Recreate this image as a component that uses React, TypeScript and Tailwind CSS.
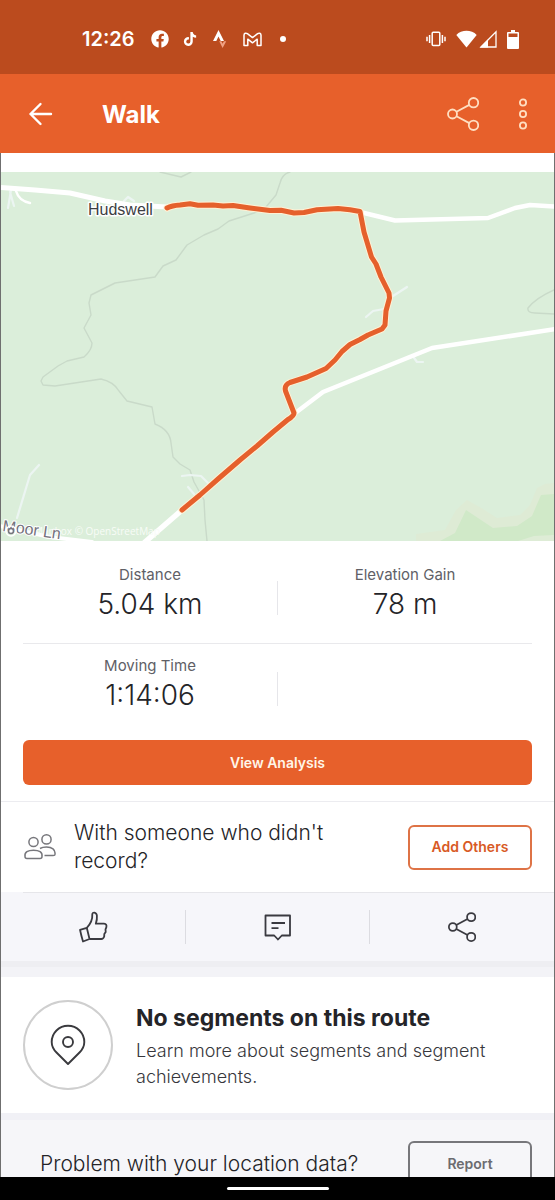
import type { ReactNode } from "react";
import { FaFacebook, FaTiktok } from "react-icons/fa";

function ShareIcon({ className }: { className?: string }) {
  return (
    <svg viewBox="0 0 32 34" fill="none" stroke="currentColor" className={className} aria-hidden="true">
      <circle cx="5.5" cy="17" r="4.5" />
      <circle cx="26.5" cy="5.7" r="4.7" />
      <circle cx="26.5" cy="28.3" r="4.7" />
      <path d="M9.5 14.8 22.3 7.9M9.5 19.2l12.8 6.9" />
    </svg>
  );
}

function StatusBar() {
  return (
    <div className="flex h-[74px] shrink-0 items-center justify-between bg-[#bb4b1e] pt-1 pr-9 pl-[82px] text-white">
      <div className="flex items-center">
        <span className="text-xl leading-6 font-semibold">12:26</span>
        <FaFacebook className="ml-4 size-[18px]" />
        <FaTiktok className="ml-3.5 size-3.5" />
        <svg viewBox="0 0 14 20" className="ml-4 h-5 w-3.5" aria-hidden="true">
          <path d="M5.5 1 0 12h3.300l2.200-4.400L7.700 12H11z" fill="#fff" />
          <path d="M6.200 12.200h2.200l1.200 2.500 1.300-2.500h2.300L9.600 19z" fill="#f0a183" />
        </svg>
        <svg viewBox="0 0 19 15" className="ml-4 h-[15px] w-[19px]" fill="none" stroke="#fff" strokeWidth="1.500" strokeLinejoin="round" aria-hidden="true">
          <path d="M1 3.200C1 1.200 3 .6 4.400 1.700l5.100 3.900 5.100-3.900C16 .6 18 1.200 18 3.200V13.400h-3.800V7.200L9.500 10.800 4.800 7.200v6.200H1z" />
        </svg>
        <span className="ml-[18px] size-1.5 rounded-full bg-white" />
      </div>
      <div className="flex items-center">
        <svg viewBox="0 0 20 16" className="h-4 w-5" fill="none" stroke="#fff" strokeWidth="1.500" aria-hidden="true">
          <rect x="6.200" y="1.300" width="7.600" height="13.200" rx="1" />
          <path d="M3.600 4v8M16.400 4v8M1 5.800v4.400M19 5.800v4.400" />
        </svg>
        <svg viewBox="0 0 21 18" className="ml-2.5 h-[18px] w-[21px]" fill="#fff" aria-hidden="true">
          <path d="M.3 5C5.500-.6 15.500-.6 20.700 5L10.500 17.600z" />
        </svg>
        <svg viewBox="0 0 18 18" className="ml-0.5 h-[18px] w-[18px]" aria-hidden="true">
          <path d="M2 17 17 1.800V17z" fill="none" stroke="#fff" strokeWidth="1.300" />
          <path d="M1 17.500 9 9.500v8z" fill="#fff" />
        </svg>
        <svg viewBox="0 0 12 19" className="ml-2.5 h-[19px] w-3" fill="#fff" aria-hidden="true">
          <path fillRule="evenodd" d="M4 0h4v2h3q1 0 1 1v15q0 1-1 1H1q-1 0-1-1V3q0-1 1-1h3zM1.500 3.500V7h9V3.500z" />
        </svg>
      </div>
    </div>
  );
}

function Header() {
  return (
    <header className="flex h-[79px] shrink-0 items-center bg-[#e7602b] pr-6 pl-7 text-white">
      <button type="button" aria-label="Back">
        <svg viewBox="0 0 26 24" className="h-6 w-[26px]" fill="none" stroke="currentColor" strokeWidth="2.400" strokeLinecap="round" strokeLinejoin="round" aria-hidden="true">
          <path d="M12.500 2 2.500 12l10 10M2.500 12H23" />
        </svg>
      </button>
      <h1 className="ml-12 flex-1 pt-0.5 text-2xl font-bold">Walk</h1>
      <button type="button" aria-label="Share" className="text-[#ffdfc2]">
        <ShareIcon className="h-[34px] w-8 stroke-[1.8]" />
      </button>
      <button type="button" aria-label="More options" className="ml-9 text-[#ffdfc2]">
        <svg viewBox="0 0 16 32" className="h-8 w-4" fill="none" stroke="currentColor" strokeWidth="1.800" aria-hidden="true">
          <circle cx="8" cy="4.500" r="3.100" />
          <circle cx="8" cy="16" r="3.100" />
          <circle cx="8" cy="27.500" r="3.100" />
        </svg>
      </button>
    </header>
  );
}

const ROUTE =
  "M167 208 Q172 205.500 180 205 L190 203.800 198 205.300 213 205 223 206 233 205.500 250 208 270 210.500 281 210.300 294 213 304 212.500 317 209.800 338 208.500 350 209.800 360 211.500 364 232 371.500 257 376 264 381 277 389 293 389.500 298 386 311 385 325 382 329 368 335 360 339.500 350 344.500 342 351.500 335 360 326 368.500 307 377 290 382.500 Q284 385 285.500 391 L294 413 Q294 416 288 419.500 L273 432 257 446 240 460 218 479 200 495 182 510";

function RouteMap() {
  return (
    <svg viewBox="1 172 553 369" className="block w-full bg-[#dbeeda]" fill="none" strokeLinejoin="round" strokeLinecap="round" role="img" aria-label="Route map">
      {/* woodland */}
      <path d="M416 541V534L445 530 456 510 467 500 483 509 497 518 520 515 530 505 537 488 545 484 554 483V541z" fill="#deebd5" />
      <path d="M440 541 455 533 466 510 493 528 517 526 532 516 541 495 554 494V541z" fill="#d0e9c8" />
      <path d="M518 541 534 536 554 535V541z" fill="#deecd6" />
      {/* footpaths */}
      <g stroke="#c9dac9" strokeWidth="1.400">
        <path d="M160 172 181 177 191 172" />
        <path d="M290 172Q282 174 280 183L276 195 266 207 254 213 229 221 218 229 204 235 187 245 176 260 163 266 155 277 115 283 91 295 89 303 91 315 84 328 92 343Q92 350 84 357L67 361 58 366 43 377 41 381 43 385 55 386 101 379Q114 382 119 391L127 401 152 407 155 424Q170 430 171 443L173 457 180 464 190 470 194 482 204 500 205 520 207 541" />
        <path d="M554 290Q536 298 528 308 527 313 535 313L554 314" />
      </g>
      {/* lanes and roads */}
      <g stroke="#ecf5f2" strokeWidth="2.200">
        <path d="M11 190 8 208M10 192 14 206M124 201 128 197 134 201M182 476 190 475 201 476 209 484M188 487 194 494M17 518 30 475 39 465M366 317 373 311 384 309M393 296 407 287M412 355 417 362 423 362" />
      </g>
      <g stroke="#fff">
        <path d="M16 191Q19 201 30 203" strokeWidth="2.500" />
        <path d="M1 187.500 35 190 70 193 105 201 130 205 167 207" strokeWidth="5" strokeLinecap="butt" />
        <path d="M360 212 395 220.500 488 218 515 208 530 205 556 206.500" strokeWidth="4.500" />
        <path d="M556 329 432 348 323 392 294 414" strokeWidth="4.500" />
        <path d="M182 510 145 542" strokeWidth="5.500" />
        <path d="M0 526 50 537 92 542" strokeWidth="4" />
      </g>
      <path d={ROUTE} stroke="#fff1d5" strokeWidth="7" />
      <path d={ROUTE} stroke="#e5602c" strokeWidth="5" />
      <text x="88" y="215" fontSize="16" fill="#3c3e43" stroke="#fff" strokeWidth="3" paintOrder="stroke" className="font-['Liberation_Sans']">
        Hudswell
      </text>
      <text x="34" y="535" fontSize="10" fill="#f8fcf7" className="font-['Open_Sans']">
        Mapbox © OpenStreetMap
      </text>
      <text x="2" y="531" fontSize="16" fill="#74727c" stroke="#fff" strokeWidth="2" paintOrder="stroke" transform="rotate(8 2 531)" className="font-['Liberation_Sans']">
        Moor Ln
      </text>
      <circle cx="11" cy="531" r="5" stroke="#fff" strokeWidth="1.500" />
      <circle cx="11" cy="531" r="2.500" stroke="#77757e" strokeWidth="1.500" fill="#fff" />
    </svg>
  );
}

function Stat({ label, value }: { label: string; value: string }) {
  return (
    <div className="flex-1 text-center">
      <div className="text-[15px] leading-5 text-[#606066]">{label}</div>
      <div className="text-[28px] leading-[38px] font-light text-[#242428]">{value}</div>
    </div>
  );
}

function StatDivider() {
  return <div className="mb-2 h-[34px] w-px self-end bg-[#e6e6ea]" />;
}

function ActionButton({ label, children }: { label: string; children: ReactNode }) {
  return (
    <button type="button" aria-label={label} className="flex h-[34px] flex-1 items-center justify-center">
      {children}
    </button>
  );
}

export default function App() {
  return (
    <div className="flex h-screen flex-col overflow-hidden bg-white font-[Inter,sans-serif] text-[#242428]">
      <StatusBar />
      <Header />

      <main className="min-h-0 flex-1 overflow-hidden border-x border-[#6f6f6f] pt-[19px]">
        <RouteMap />

        {/* Stats */}
        <section className="px-[22px] pb-4">
          <div className="flex border-b border-[#e9e9ec] pt-6 pb-5">
            <Stat label="Distance" value="5.04 km" />
            <StatDivider />
            <Stat label="Elevation Gain" value="78 m" />
          </div>
          <div className="flex pt-3 pb-[26px]">
            <Stat label="Moving Time" value="1:14:06" />
            <StatDivider />
            <div className="flex-1" />
          </div>
          <button type="button" className="h-[45px] w-full rounded-md bg-[#e7602b] text-sm font-semibold text-[#fff6e8]">
            View Analysis
          </button>
        </section>

        {/* Add others */}
        <section className="flex items-center border-t border-[#ececf0] px-[22px] py-[17px]">
          <svg viewBox="0 0 33 26" className="h-[26px] w-[33px] shrink-0" fill="none" stroke="#77777c" strokeWidth="1.500" strokeLinejoin="round" aria-hidden="true">
            <circle cx="10.500" cy="8" r="4.600" />
            <circle cx="23.500" cy="5.400" r="4.600" />
            <path d="M2 22.500C1.300 18 5 16.200 10.500 16.200S19.700 18 19 22.500Q19 24.500 17 24.500H4Q2 24.500 2 22.500z" />
            <path d="M17 14.500C19 13.300 21 13 23.500 13 29 13 32.500 15.500 32 20 32 21.500 31.500 21.500 30 21.500H21.500" />
          </svg>
          <p className="ml-[18px] flex-1 pr-16 text-[21px] leading-7 font-light">With someone who didn't record?</p>
          <button type="button" className="h-[45px] w-[124px] shrink-0 rounded-md border-2 border-[#de7346] text-sm font-semibold text-[#d85a25]">
            Add Others
          </button>
        </section>

        {/* Kudos, comments, share */}
        <section className="bg-[#f6f6fa]">
          <div className="ml-[22px] border-t border-[#e6e6ea]" />
          <div className="flex items-center divide-x divide-[#dcdce1] py-[17px] text-[#3a3a40]">
            <ActionButton label="Give kudos">
              <svg viewBox="0 0 30 32" className="h-8 w-[30px]" fill="none" stroke="currentColor" strokeWidth="1.800" strokeLinejoin="round" aria-hidden="true">
                <path d="M2 18.800 8.800 16.800 11.500 28 5 30.500Q3.300 25 2 18.800z" />
                <path d="M8.800 16.800Q14.800 10.500 14.300 3.200C14.300.8 18.400.8 18.900 4.500Q19.300 8 17.800 12.700H26Q29.200 13 28.300 16.400L27.500 18.300 27.700 21 26.300 23 26.200 25.500Q25.300 28.200 23 28H11.500" />
              </svg>
            </ActionButton>
            <ActionButton label="Comments">
              <svg viewBox="0 0 28 28" className="size-7" fill="none" stroke="currentColor" strokeWidth="1.800" strokeLinejoin="round" aria-hidden="true">
                <path d="M1.500 2.500H26V22.500H17.800L14 26.500 10.200 22.500H1.500z" />
                <path d="M7.500 10H21M7.500 15.200H14.500" />
              </svg>
            </ActionButton>
            <ActionButton label="Share activity">
              <ShareIcon className="h-[30px] w-7 stroke-[2]" />
            </ActionButton>
          </div>
        </section>
        <div className="h-4 border-t-6 border-[#eeeef2] bg-[#f3f3f7]" />

        {/* Segments */}
        <section className="flex items-center px-[22px] py-[23px]">
          <div className="flex size-[90px] shrink-0 items-center justify-center rounded-full border-2 border-[#cfcfcf]">
            <svg viewBox="0 0 36 42" className="h-[42px] w-9" fill="none" stroke="#3a3a3e" strokeWidth="1.900" strokeLinejoin="round" aria-hidden="true">
              <path d="M18 40 6.500 28.500C3 25 1.700 22 1.700 18a16.300 16.300 0 0 1 32.600 0C34.300 22 33 25 29.500 28.500z" />
              <circle cx="18" cy="18" r="5" />
            </svg>
          </div>
          <div className="ml-[23px] pt-0.5">
            <h2 className="text-[23px] leading-8 font-bold">No segments on this route</h2>
            <p className="mt-1 text-lg leading-[26px] font-light text-[#37373c]">
              Learn more about segments and segment achievements.
            </p>
          </div>
        </section>

        {/* Report */}
        <section className="flex items-center justify-between border-t-7 border-[#f1f1f6] bg-[#f6f6f9] py-[21px] pr-[22px] pl-[39px]">
          <p className="text-[21px] leading-7 font-light">Problem with your location data?</p>
          <button type="button" className="h-[45px] w-[124px] shrink-0 rounded-md border-2 border-[#77777b] text-sm font-semibold text-[#6c6c70]">
            Report
          </button>
        </section>
      </main>

      <div className="flex h-[23px] shrink-0 items-center justify-center bg-black">
        <div className="h-[3px] w-[102px] rounded-full bg-white" />
      </div>
    </div>
  );
}
